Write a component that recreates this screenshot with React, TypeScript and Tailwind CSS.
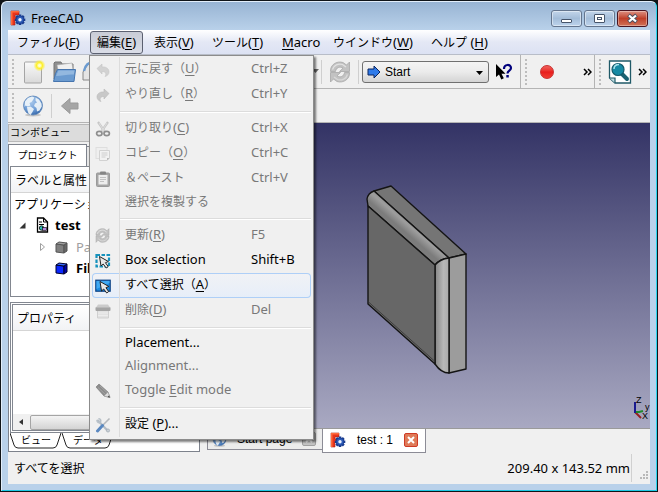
import React, { Fragment, ReactNode } from "react";

const uiFont = "font-['Noto_Sans','Noto_Sans_CJK_JP',sans-serif]";
const gothic = "font-['Liberation_Sans','Noto_Sans_CJK_JP',sans-serif]";

/* Japanese runs are set one size below Latin ones; "_" marks the mnemonic letter. */
function Label({ text }: { text: string }) {
  const parts = text.split(/([\u3000-\u9fff\uff00-\uffef]+|_\w)/).filter(Boolean);
  return (
    <span className="whitespace-nowrap">
      {parts.map((p, i) => {
        if (p.startsWith("_"))
          return <span key={i} className="underline underline-offset-2">{p.slice(1)}</span>;
        if (/[\u3000-\u9fff\uff00-\uffef]/.test(p))
          return <span key={i} className="font-['Noto_Sans_CJK_JP',sans-serif] text-xs leading-none">{p}</span>;
        return <Fragment key={i}>{p}</Fragment>;
      })}
    </span>
  );
}

function Svg({ s, vb, children }: { s: number; vb?: string; children: ReactNode }) {
  return (
    <svg width={s} height={s} viewBox={vb ?? `0 0 ${s} ${s}`} className="shrink-0" aria-hidden="true">
      {children}
    </svg>
  );
}

function FreeCadIcon() {
  return (
    <Svg s={16}>
      <path d="M1 1h8v4H5v2h3v3H5v5H1z" fill="#e8341c" stroke="#a81d10" strokeWidth=".6" />
      <path d="M1 1h8v1.500H2.500V15H1z" fill="#ff6a3c" />
      <g stroke="#17398c" strokeWidth="2.600">
        <path d="M10 4.500v10.500M4.800 9.700h10.500M6.300 6l7.500 7.500M13.800 6l-7.500 7.500" />
      </g>
      <circle cx="10" cy="9.700" r="3.900" fill="#2d5cb8" stroke="#17398c" strokeWidth=".8" />
      <circle cx="10" cy="9.700" r="1.700" fill="#eef4ff" />
    </Svg>
  );
}

function GlobeIcon({ s }: { s: number }) {
  return (
    <Svg s={s} vb="0 0 22 22">
      <defs>
        <radialGradient id="globe" cx=".4" cy=".3" r=".75">
          <stop offset="0" stopColor="#a9c9ec" />
          <stop offset=".6" stopColor="#6e9dd6" />
          <stop offset="1" stopColor="#2f62a6" />
        </radialGradient>
      </defs>
      <ellipse cx="11" cy="20" rx="8" ry="1.500" fill="#c4c4c4" />
      <circle cx="11" cy="10.500" r="9.500" fill="url(#globe)" stroke="#5c84b6" strokeWidth=".8" />
      <path d="M3 6.500L6 3l4-1.500 2.500 1-1.500 2.500-1.500 2-2 1 1 2.500-3 1-2-1-1 1.500zM5 12l3.500-.5 3.500 2.500-1.500 3-2 3-2-1.500-1-3zM13.500 2.500l3.500 2 2.500 4 .3 3-2.300 4-2.500 1-.5-3.500-2.500-2 1-2.500 2-1-1.500-2z" fill="#eff5fa" opacity=".92" />
    </Svg>
  );
}

function RefreshIcon({ s }: { s: number }) {
  return (
    <Svg s={s} vb="0 0 22 22">
      <g fill="#c2c2c2" stroke="#a8a8a8" strokeWidth=".8">
        <path d="M1.500 10.500C1 4 7.500-.5 14 1.500L17.500 4 20.500 1v9.500h-10l3.500-3.300C11 5 7 6.500 6.500 10.500z" />
        <path d="M20.500 11.500c.5 6.500-6 11-12.500 9L4.500 18l-3 3v-9.500h10L8 14.800c3 2.200 7 .7 7.500-3.300z" />
      </g>
      <path d="M3.500 8.500C4.500 4.500 9.500 2 13.500 3.500l3.500 2.500" fill="none" stroke="#e2e2e2" strokeWidth="1.300" />
      <path d="M18.500 13.500c-1 4-6 6.500-10 5L5 16" fill="none" stroke="#d8d8d8" strokeWidth="1.300" />
    </Svg>
  );
}

const cursor = "M0 0l1.500 9.500 2.200-2 3 4 2-1.500-2.800-3.800 3-1.200z";

const icons: Record<string, ReactNode> = {
  undo: (
    <Svg s={16}><path d="M2 6.500L7 2v3c4.500-.5 7 2 7 5 0 2-1.500 4-4 4.500 1.500-1.500 1.500-5-3-5V12z" fill="#d2d2d2" stroke="#c4c4c4" strokeWidth=".6" /></Svg>
  ),
  redo: (
    <Svg s={16}><path d="M14 6.500L9 2v3C4.500 4.500 2 7 2 10c0 2 1.500 4 4 4.500-1.500-1.500-1.500-5 3-5V12z" fill="#c8c8c8" stroke="#bababa" strokeWidth=".6" /></Svg>
  ),
  cut: (
    <Svg s={16}>
      <path d="M3 1l7 10M13 1L6 11" stroke="#c6c6c6" strokeWidth="2.200" />
      <path d="M4 2l5 8M12 2l-5 8" stroke="#e6e6e6" strokeWidth=".7" />
      <ellipse cx="4.300" cy="12.500" rx="2.700" ry="2.200" fill="none" stroke="#8e8e8e" strokeWidth="1.700" />
      <ellipse cx="11.700" cy="12.500" rx="2.700" ry="2.200" fill="none" stroke="#8e8e8e" strokeWidth="1.700" />
    </Svg>
  ),
  copy: (
    <Svg s={16}>
      <rect x="1" y="1.500" width="11" height="11" fill="#efefef" stroke="#dedede" />
      <path d="M4.500 4.500h10V12l-2.500 2.500H4.500z" fill="#f2f2f2" stroke="#d2d2d2" />
      <path d="M6.500 7h6M6.500 9h6M6.500 11h4" stroke="#cecece" />
      <path d="M14.500 12H12v2.500z" fill="#b9b9b9" />
    </Svg>
  ),
  paste: (
    <Svg s={16}>
      <rect x="1.500" y="2" width="13" height="13.500" rx="1" fill="#a6a6a6" stroke="#9a9a9a" />
      <rect x="3.500" y="4" width="9" height="9.500" fill="#ededed" />
      <rect x="5" y=".5" width="6" height="3" rx="1" fill="#858585" />
      <path d="M5 6.500h6M5 8.500h6M5 10.500h4" stroke="#c2c2c2" />
    </Svg>
  ),
  refresh: <RefreshIcon s={15} />,
  box: (
    <Svg s={16}>
      <rect x="1.500" y="2" width="12.500" height="11.500" fill="none" stroke="#1592bd" strokeWidth="2.200" strokeDasharray="3.500 1.500" />
      <g transform="translate(4.500 3.500)"><path d={cursor} fill="#e8e8e8" stroke="#222" strokeWidth="1" /></g>
    </Svg>
  ),
  all: (
    <Svg s={16}>
      <rect x=".8" y="2.200" width="14.400" height="11" fill="#1c8be0" stroke="#0d4284" strokeWidth="1.200" />
      <path d="M1.500 3h13v2L1.500 11z" fill="#3fa9f3" />
      <g transform="translate(5 3.500)"><path d={cursor} fill="#e8e8e8" stroke="#222" strokeWidth="1" /></g>
    </Svg>
  ),
  del: (
    <Svg s={16}>
      <path d="M2.500 7h11v8h-11z" fill="#e2e2e2" stroke="#d0d0d0" />
      <path d="M3 10h10M3 12.500h10" stroke="#ededed" />
      <rect x=".5" y="4" width="15" height="4" rx="1" fill="#a4a4a4" />
      <path d="M3 1.500h10l2 3H1z" fill="#cbcbcb" />
    </Svg>
  ),
  edit: (
    <Svg s={16}>
      <path d="M1 4l3-3 9 8 2 5.500L9 13z" fill="#8c8c8c" stroke="#777" strokeWidth=".6" />
      <path d="M3 4.500l8 7.500M5 3l7.500 7" stroke="#aaa" strokeWidth=".8" />
      <path d="M13 9l2 5.500L9 13z" fill="#dcdcdc" stroke="#999" strokeWidth=".5" />
      <path d="M14 12.500l1 2-2.500-.6z" fill="#444" />
    </Svg>
  ),
  prefs: (
    <Svg s={16}>
      <path d="M3 3.500l9.500 10" stroke="#b4bdc6" strokeWidth="2.200" strokeLinecap="round" />
      <path d="M1 2.500l2.500 2.500L5 3.500 3 1c2-.5 4 1 3.500 3.500L4.500 6.500C2.500 6.800 1 4.500 1 2.500z" fill="#b7c0c8" />
      <circle cx="13" cy="13.500" r="1.600" fill="#c9d0d6" stroke="#98a2ac" strokeWidth=".6" />
      <path d="M14.500 1.500L7.500 8.500" stroke="#b4b8bc" strokeWidth="1.600" />
      <path d="M7.500 8.500L2.500 14" stroke="#5a88c0" strokeWidth="3" strokeLinecap="round" />
    </Svg>
  ),
};

type Item = { text: string; icon?: string; keys?: string; on?: boolean; hot?: boolean; short?: boolean };
const groups: Item[][] = [
  [
    { text: "元に戻す（_U）", icon: "undo", keys: "Ctrl+Z" },
    { text: "やり直し（_R）", icon: "redo", keys: "Ctrl+Y" },
  ],
  [
    { text: "切り取り(_C)", icon: "cut", keys: "Ctrl+X" },
    { text: "コピー（_O）", icon: "copy", keys: "Ctrl+C" },
    { text: "＆ペースト", icon: "paste", keys: "Ctrl+V" },
    { text: "選択を複製する", short: true },
  ],
  [
    { text: "更新(_R)", icon: "refresh", keys: "F5" },
    { text: "Box selection", icon: "box", keys: "Shift+B", on: true },
    { text: "すべて選択（_A）", icon: "all", on: true, hot: true },
    { text: "削除(_D)", icon: "del", keys: "Del" },
  ],
  [
    { text: "Placement...", on: true, short: true },
    { text: "Alignment...", short: true },
    { text: "Toggle _Edit mode", icon: "edit" },
  ],
  [{ text: "設定 (_P)...", icon: "prefs", on: true }],
];

function EditMenu() {
  return (
    <div role="menu" className="absolute -left-px top-6 z-20 w-[225px] border border-[#8c8c8c] bg-[#f0f0f0] px-0.5 pt-px pb-0.5 shadow-[2px_2px_2px_rgba(0,0,0,0.5)]">
      {groups.map((g, gi) => (
        <Fragment key={gi}>
          {gi > 0 && (
            <div className="flex h-[9px] items-center" role="separator">
              <div className="h-full w-7 border-r border-[#dcdcdc]" />
              <div className="h-0.5 flex-1 border-b border-white bg-[#dcdcdc]" />
            </div>
          )}
          {g.map((it) => (
            <button
              key={it.text}
              role="menuitem"
              disabled={!it.on}
              className={`relative flex w-full items-center text-left ${it.short ? "h-[23px]" : "h-[25px]"} ${
                it.on ? "text-black" : "text-[#787878]"
              } ${it.hot ? "rounded-sm bg-linear-to-b from-[#f1f2f5] to-[#e6eef9] ring-1 ring-[#aecff7] ring-inset" : ""}`}
            >
              <span className="flex h-full w-7 items-center border-r border-[#dcdcdc] pl-[3px]">{it.icon && icons[it.icon]}</span>
              <span className="w-[131px] pb-[3px] pl-[5px]"><Label text={it.text} /></span>
              <span className="pb-[3px]">{it.keys}</span>
            </button>
          ))}
        </Fragment>
      ))}
    </div>
  );
}

const menus = [
  { text: "ファイル(_F)", w: "w-20" },
  { text: "編集(_E)", w: "w-[57px]", open: true },
  { text: "表示(_V)", w: "w-[58px]" },
  { text: "ツール(_T)", w: "w-[70px]" },
  { text: "_Macro", w: "w-[51px]" },
  { text: "ウインドウ(_W)", w: "w-[98px]" },
  { text: "ヘルプ (_H)", w: "w-20" },
];

function Handle() {
  return (
    <span className="flex w-[3px] flex-col gap-0.5">
      {[0, 1, 2, 3, 4, 5, 6].map((i) => (
        <span key={i} className="size-0.5 bg-[#bdbdbd]" />
      ))}
    </span>
  );
}

const Rule = () => <span className="h-6 w-px shrink-0 bg-[#cfcfcf]" />;
const Edge = () => <span className="h-full w-px shrink-0 bg-[#b4b4b4]" />;

function More() {
  return (
    <button aria-label="More" className="shrink-0">
      <svg width="9" height="8" viewBox="0 0 9 8" fill="none" stroke="#000" strokeWidth="1.500"><path d="M1 1l3 3-3 3M5 1l3 3-3 3" /></svg>
    </button>
  );
}

function NewIcon() {
  return (
    <Svg s={24}>
      <defs>
        <linearGradient id="sheet" x2="0" y2="1"><stop stopColor="#fafafa" /><stop offset="1" stopColor="#d9d9d9" /></linearGradient>
        <radialGradient id="glow"><stop offset=".15" stopColor="#ffffd0" /><stop offset=".5" stopColor="#fff02a" /><stop offset="1" stopColor="#fff02a" stopOpacity="0" /></radialGradient>
      </defs>
      <rect x="2.500" y="2" width="17" height="21" rx="1" fill="url(#sheet)" stroke="#a5a5a5" />
      <circle cx="17.500" cy="5.500" r="6" fill="url(#glow)" />
    </Svg>
  );
}

function OpenIcon() {
  return (
    <Svg s={24}>
      <path d="M2 19V3l1-1h6l1 2h11v15z" fill="#8f8f8f" stroke="#747474" />
      <path d="M5 5l15-2 1 7H6z" fill="#f0f0f0" stroke="#aaa" strokeWidth=".6" />
      <path d="M5.500 9.500h18l-1.500 12H1.500l2-8z" fill="#6b9bd0" stroke="#4675ae" />
      <path d="M6.500 10.500h16l-.6 4C16 14 10 16 4 16z" fill="#93b8df" />
    </Svg>
  );
}

function DocSearchIcon() {
  return (
    <Svg s={24}>
      <path d="M1.500 1h21v22H7l-5.500-5z" fill="#fff" stroke="#205a68" strokeWidth="1.300" />
      <path d="M1.500 18H7v5" fill="#bcdbe0" stroke="#205a68" strokeWidth="1.200" />
      <path d="M14 14l5 5" stroke="#1b6271" strokeWidth="4" strokeLinecap="round" />
      <circle cx="10" cy="9.500" r="6" fill="#168aa4" stroke="#125a6b" strokeWidth="1.200" />
      <path d="M6 9c0-3 2-4.500 5-4.500" stroke="#a7e3ee" strokeWidth="1.500" fill="none" />
    </Svg>
  );
}

function Toolbars() {
  return (
    <div className="border-t border-[#b8bdc8]">
      <div className="flex h-[34px] items-center border-b border-[#b4b4b4] pl-1">
        <div className="flex w-[309px] shrink-0 items-center">
          <Handle />
          <button aria-label="New" className="ml-[7px]"><NewIcon /></button>
          <button aria-label="Open" className="ml-1.5"><OpenIcon /></button>
          <button aria-label="Save" className="ml-1.5">
            <Svg s={24}>
              <path d="M1 20V12l5-8h12l3 8v8z" fill="#e5e5e5" stroke="#888" />
              <path d="M2 11C3 6 6 2 12 2" fill="none" stroke="#6b9bd0" strokeWidth="2.500" />
            </Svg>
          </button>
          <svg width="7" height="5" className="ml-auto mr-0.5" aria-hidden="true"><path d="M0 0h7L3.500 4z" fill="#666" /></svg>
        </div>
        <Rule />
        <button aria-label="Refresh" className="mx-[7px]"><RefreshIcon s={22} /></button>
        <Rule />
        <div className="relative ml-[3px] w-[127px] shrink-0">
          <select
            aria-label="Workbench"
            className={`h-[22px] w-full appearance-none rounded-[3px] border border-[#707070] bg-linear-to-b from-[#f4f4f4] via-[#ebebeb] to-[#d4d4d4] pl-[22px] text-xs ${gothic}`}
          >
            <option>Start</option>
          </select>
          <svg width="14" height="14" className="pointer-events-none absolute top-1 left-[5px]"><path d="M1 4h6V1l6 6-6 6v-3H1z" fill="#2f7bea" stroke="#0b2560" /></svg>
          <svg width="7" height="4" className="pointer-events-none absolute top-[10px] right-[6px]"><path d="M0 0h7L3.500 4z" /></svg>
        </div>
        <button aria-label="What's this?" className="ml-1.5">
          <svg width="18" height="18" viewBox="0 0 18 18">
            <path d="M1 1v13l3-2.500 2.300 5 2.500-1.200-2.300-4.600h4z" />
            <path d="M9 6C9 .8 16 .8 16 5c0 2.700-3.500 2.500-3.500 5.500" fill="none" stroke="#00007c" strokeWidth="2.200" />
            <path d="M11.300 12h2.500v2.500h-2.500z" fill="#00007c" />
          </svg>
        </button>
        <div className="ml-[7px] flex h-full min-w-0 flex-1 items-center">
          <Edge />
          <span className="ml-1"><Handle /></span>
          <button aria-label="Record macro" className="ml-3 size-3.5 rounded-full border border-[#c93030] bg-linear-to-b from-[#f0605c] via-[#e81c1c] to-[#f03a30]" />
          <span className="ml-auto mr-0.5 flex"><More /></span>
        </div>
        <div className="flex h-full shrink-0 items-center">
          <Edge />
          <span className="ml-1"><Handle /></span>
          <button aria-label="Find in document" className="ml-[6px]"><DocSearchIcon /></button>
          <span className="mr-[3px] ml-1.5 flex"><More /></span>
        </div>
      </div>
      <div className="flex h-[34px] items-center border-b border-[#b4b4b4] pl-1">
        <Handle />
        <button aria-label="Web" className="ml-[7px]"><GlobeIcon s={22} /></button>
        <span className="ml-[7px] flex"><Rule /></span>
        <button aria-label="Back" className="ml-[9px]">
          <svg width="18" height="18"><path d="M.5 9L9 1.500V6h8v6H9v4.500z" fill="#a5a5a5" stroke="#999" /></svg>
        </button>
      </div>
    </div>
  );
}

function Cube({ face, side, top }: { face: string; side: string; top: string }) {
  return (
    <svg width="13" height="13" className="shrink-0" strokeWidth="1" strokeLinejoin="round">
      <g className={side === "#0000a8" ? "stroke-[#00002a]" : "stroke-[#555]"}>
        <path d="M1 3l8 1v8L1 11z" fill={face} />
        <path d="M9 4l3-2v8l-3 2z" fill={side} />
        <path d="M1 3l3-2 8 1-3 2z" fill={top} />
      </g>
    </svg>
  );
}

function ComboView() {
  return (
    <aside className="flex w-[192px] shrink-0 flex-col pt-px">
      <h2 className={`h-[18px] border border-[#b8b8b8] bg-[#dcdcdc] pl-px text-[10px] leading-4 ${gothic}`}>コンボビュー</h2>
      <div className="mt-0.5 flex items-end">
        <button className={`h-[22px] w-[79px] border border-b-0 border-[#7d828c] bg-white text-[10px] ${gothic}`}>プロジェクト</button>
        <button aria-label="タスク" className="h-5 w-14 border border-b-0 border-l-0 border-[#7d828c] bg-[#e6e6e6]" />
      </div>
      <div className="flex min-h-0 flex-1 flex-col border border-t-0 border-[#7d828c] bg-white px-px">
        <section className="h-[131px] border border-[#828790] bg-white">
          <div className="flex h-[26px] items-center border-b border-[#d5d5d5] bg-linear-to-b from-white to-[#f2f3f5] pl-1">
            <Label text="ラベルと属性" />
          </div>
          <ul className="pl-[3px]">
            <li className="flex h-[21px] items-center"><Label text="アプリケーション" /></li>
            <li className="flex h-[22px] items-center font-bold">
              <svg width="7" height="7" className="ml-[5px]"><path d="M6.500 .5v6h-6z" fill="#333" /></svg>
              <svg width="13" height="16" className="mr-[6px] ml-2.5" fill="none">
                <path d="M1.500 1h6l4 4v10h-10z" fill="#fff" stroke="#000" strokeWidth="1.300" />
                <path d="M7.500 1v4h4M3 5h3M3 7.500h5" stroke="#000" />
                <circle cx="5.500" cy="11" r="2.200" fill="#2dbab0" stroke="#000" strokeWidth=".8" />
                <rect x="6.500" y="10.500" width="4" height="3" fill="#b58be0" stroke="#000" strokeWidth=".6" />
              </svg>
              test
            </li>
            <li className="flex h-[22px] items-center text-[#a0a0a0]">
              <svg width="6" height="8" className="ml-[26px] mr-[9px]"><path d="M.5 .5l4 3.500-4 3.500z" fill="#fff" stroke="#a0a0a0" /></svg>
              <Cube face="#808080" side="#686868" top="#a0a0a0" />
              <span className="ml-2">Pad</span>
            </li>
            <li className="flex h-5 items-center pl-[41px] font-bold">
              <Cube face="#0a28ff" side="#0000a8" top="#3a6bff" />
              <span className="ml-2">Fillet</span>
            </li>
          </ul>
        </section>
        <section className="mt-[5px] flex min-h-0 flex-1 flex-col border border-[#828790] p-px">
          <div className="flex min-h-0 flex-1 flex-col border border-[#828790]">
            <div className="flex h-[26px] items-center border-b border-[#d5d5d5] bg-linear-to-b from-white to-[#f2f3f5] pl-1">
              <Label text="プロパティ" />
            </div>
            <div className="mt-auto flex h-4 items-center bg-[#f0f0f0]">
              <svg width="5" height="6" className="mx-[6px]"><path d="M4 0v6L0 3z" fill="#333" /></svg>
              <div className="h-[15px] flex-1 rounded-xs border border-[#a5a5a5] bg-linear-to-b from-[#f4f4f4] to-[#d3d3d3]" />
            </div>
          </div>
        </section>
        <div className="flex h-[18px] shrink-0">
          {["ビュー", "データ"].map((t) => (
            <button key={t} className={`relative h-4 w-[52px] text-[10px] leading-none ${gothic}`}>
              <svg viewBox="0 0 52 16" className="absolute inset-0 size-full" fill="none" stroke="#222"><path d="M0 0l4 12q1 3 4 3h35q3 0 4-3l4-12" /></svg>
              {t}
            </button>
          ))}
        </div>
      </div>
    </aside>
  );
}

function Scene() {
  return (
    <svg viewBox="204 123 446 305" className="size-full">
      <defs>
        <linearGradient id="sky" x2="0" y2="1"><stop stopColor="#333365" /><stop offset="1" stopColor="#a9a9c2" /></linearGradient>
        <linearGradient id="edgeV"><stop stopColor="#858585" /><stop offset=".6" stopColor="#b8b8b8" /><stop offset="1" stopColor="#ababab" /></linearGradient>
        <linearGradient id="edgeT" gradientUnits="userSpaceOnUse" x1="410" y1="212" x2="398" y2="226"><stop stopColor="#828282" /><stop offset=".6" stopColor="#9d9d9d" /><stop offset="1" stopColor="#7c7c7c" /></linearGradient>
      </defs>
      <rect x="0" y="123" width="900" height="305" fill="url(#sky)" />
      <g stroke="#141414" strokeWidth="1.400" strokeLinejoin="round">
        <path d="M374 191L391 186 466 254 449 258z" fill="#757575" />
        <path d="M449 258L466 254V369L449 373z" fill="#9c9c9c" />
        <path d="M368 206l-1-7q1-6 7-8L449 258q-9 1-14 7z" fill="url(#edgeT)" />
        <path d="M435 265q5-6 14-7V373q-8 0-14-9z" fill="url(#edgeV)" />
        <path d="M368 206L435 265V364L368 304z" fill="#676767" />
        <path d="M368 301.500L435 361.500" strokeWidth=".8" stroke="#333" />
      </g>
      <g strokeWidth="2" fill="none">
        <path d="M635 412l6 6" stroke="#962020" />
        <path d="M635 412h4l4-1" stroke="#1f8a2c" />
        <path d="M635 413V402" stroke="#1b1b90" />
      </g>
      <g className="font-['Liberation_Sans',sans-serif] text-[9px]">
        <text x="636" y="403">Z</text>
        <text x="645" y="410">y</text>
        <text x="642" y="419">X</text>
      </g>
    </svg>
  );
}

function CloseMark() {
  return <svg width="8" height="8" stroke="#fff" strokeWidth="2"><path d="M1 1l6 6M7 1L1 7" /></svg>;
}

function Documents() {
  return (
    <main className="ml-1 flex min-w-0 flex-1 flex-col">
      <div className="min-h-0 flex-1 overflow-hidden bg-linear-to-b from-[#333365] to-[#a9a9c2]"><Scene /></div>
      <div className={`flex h-6 shrink-0 items-start border-t border-[#9a9a9a] pl-[3px] text-xs ${gothic}`}>
        <div className="flex h-[21px] w-[115px] items-center border border-t-0 border-r-0 border-[#8c8c96] bg-[#ececec] pl-1">
          <GlobeIcon s={15} />
          <button className="ml-2.5 whitespace-nowrap">Start page</button>
          <button aria-label="Close Start page" className="mr-1.5 ml-auto flex size-3.5 items-center justify-center rounded-xs border border-[#a0a0a0] bg-[#c4c4c4]"><CloseMark /></button>
        </div>
        <div className="flex h-6 w-[104px] items-center border border-t-0 border-[#8c8c96] bg-white pb-px pl-[7px]">
          <FreeCadIcon />
          <button className="ml-[11px] whitespace-nowrap">test : 1</button>
          <button aria-label="Close test" className="mr-[7px] ml-auto flex size-3.5 items-center justify-center rounded-xs border border-[#cf3a25] bg-[#df7a58]"><CloseMark /></button>
        </div>
      </div>
    </main>
  );
}

const winBtn = "flex h-[17px] w-[31px] items-center justify-center rounded-[3px] border border-[#64758e] bg-linear-to-b from-[#c3d5ea] via-[#a4bdd9] to-[#bdd3ec] shadow-[inset_0_0_0_1px_rgba(255,255,255,0.45)]";

export default function App() {
  return (
    <div className={`h-screen min-h-0 overflow-hidden bg-[#101418] p-px text-[13px] leading-4 text-black ${uiFont}`}>
      <div className="flex h-full flex-col rounded-t-md border border-t-[#e3eefa] border-r-[#2bd5ee] border-b-[#1cc8e4] border-l-[#e3eefa] bg-[#b9d1ea] bg-linear-to-b from-[#98b4d3] to-[#b9d1ea] to-[28px] px-1.5 pb-1.5">
        <header className="flex h-7 shrink-0 items-start pl-0.5">
          <div className="flex h-8 items-center gap-[5px]"><FreeCadIcon /><h1>FreeCAD</h1></div>
          <div className="mt-2 mr-0.5 ml-auto flex gap-0.5">
            <button aria-label="Minimize" className={winBtn}><span className="mt-1 h-1 w-[11px] rounded-[1px] border border-[#46546a] bg-white" /></button>
            <button aria-label="Maximize" className={winBtn}><span className="flex h-[9px] w-[11px] items-center justify-center rounded-[1px] border border-[#46546a] bg-white"><span className="h-[3px] w-[5px] border border-[#46546a]" /></span></button>
            <button aria-label="Close" className="flex h-[17px] w-[31px] items-center justify-center rounded-[3px] border border-[#4a1420] bg-linear-to-b from-[#dc9082] via-[#bf3f29] to-[#d07156] shadow-[inset_0_0_0_1px_rgba(255,255,255,0.35)]">
              <svg width="13" height="11"><path d="M2.500 2l8 7M10.500 2l-8 7" stroke="#4b4f60" strokeWidth="4" /><path d="M3 2.500l7 6M10 2.500l-7 6" stroke="#fff" strokeWidth="2.300" /></svg>
            </button>
          </div>
        </header>
        <div className="flex min-h-0 flex-1 flex-col bg-[#f0f0f0]">
          <nav className="flex h-6 shrink-0 items-start bg-linear-to-b from-white via-[#e4e8f5] to-[#dce2f3] pt-px pl-[2px]">
            {menus.map((m) => (
              <div key={m.text} className={`relative shrink-0 ${m.w}`}>
                <button
                  className={`flex h-[23px] items-center rounded-[3px] border px-1.5 pb-0.5 ${
                    m.open ? "border-[#5b6070] bg-linear-to-b from-[#c9ccd6] to-[#dadde7]" : "border-transparent"
                  }`}
                >
                  <Label text={m.text} />
                </button>
                {m.open && <EditMenu />}
              </div>
            ))}
          </nav>
          <Toolbars />
          <div className="flex min-h-0 flex-1">
            <ComboView />
            <Documents />
          </div>
          <footer className="flex h-8 shrink-0 items-center pl-[6px]">
            <Label text="すべてを選択" />
            <span className="ml-auto whitespace-nowrap">209.40 x 143.52 mm</span>
            <span className="ml-px h-7 w-px bg-[#d0d0d0]" />
            <svg width="18" height="28" fill="#b8b8b8" aria-hidden="true">
              <path d="M14 17h2v2h-2zM11 20h2v2h-2zM14 20h2v2h-2zM8 23h2v2H8zM11 23h2v2h-2zM14 23h2v2h-2z" />
            </svg>
          </footer>
        </div>
      </div>
    </div>
  );
}
